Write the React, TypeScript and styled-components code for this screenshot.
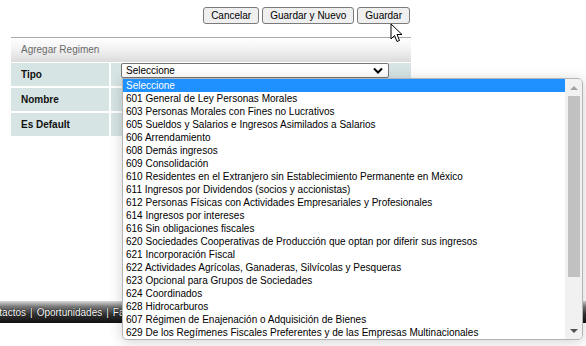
import styled, { createGlobalStyle } from 'styled-components'

const GlobalStyle = createGlobalStyle`
  body {
    margin: 0;
    padding: 0;
    background: #ffffff;
    font-family: "Liberation Sans", Arial, sans-serif;
    font-size: 10px;
  }
`

const opciones = [
  'Seleccione',
  '601 General de Ley Personas Morales',
  '603 Personas Morales con Fines no Lucrativos',
  '605 Sueldos y Salarios e Ingresos Asimilados a Salarios',
  '606 Arrendamiento',
  '608 Demás ingresos',
  '609 Consolidación',
  '610 Residentes en el Extranjero sin Establecimiento Permanente en México',
  '611 Ingresos por Dividendos (socios y accionistas)',
  '612 Personas Físicas con Actividades Empresariales y Profesionales',
  '614 Ingresos por intereses',
  '616 Sin obligaciones fiscales',
  '620 Sociedades Cooperativas de Producción que optan por diferir sus ingresos',
  '621 Incorporación Fiscal',
  '622 Actividades Agrícolas, Ganaderas, Silvícolas y Pesqueras',
  '623 Opcional para Grupos de Sociedades',
  '624 Coordinados',
  '628 Hidrocarburos',
  '607 Régimen de Enajenación o Adquisición de Bienes',
  '629 De los Regímenes Fiscales Preferentes y de las Empresas Multinacionales',
]

const Page = styled.div`
  position: relative;
  height: 346px;
  overflow: hidden;
`

const Main = styled.div`
  height: 301px;
  box-sizing: border-box;
  padding: 7px 0 0 11px;
`

const Panel = styled.div`
  width: 400px;
`

const Toolbar = styled.div`
  display: flex;
  justify-content: flex-end;
  gap: 3px;
  padding-right: 1px;
`

const Boton = styled.button`
  height: 17px;
  padding: 0 7px;
  font-family: "Liberation Sans", Arial, sans-serif;
  font-size: 10px;
  color: #000;
  background: #efefef;
  border: 1px solid #7a7a7a;
  border-radius: 3px;
`

const Encabezado = styled.div`
  margin-top: 13px;
  height: 24px;
  line-height: 24px;
  border-top: 1px solid #a9a9a9;
  background: linear-gradient(#ffffff, #f4f4f4 40%, #dcdcdc);
  color: #6a6a6a;
  padding-left: 10px;
`

const Tabla = styled.div`
  margin-top: 1px;
  display: grid;
  grid-template-columns: 98px 300px;
  grid-auto-rows: 23px;
  gap: 2px;
`

const Etiqueta = styled.div`
  background: #d7e4e4;
  font-weight: bold;
  color: #111;
  display: flex;
  align-items: center;
  padding-left: 10px;
`

const Valor = styled.div`
  background: #d7e4e4;
  padding-left: 10px;
`

const SelectWrap = styled.div`
  position: relative;
  width: 268px;
`

const SelectBox = styled.div`
  height: 15px;
  box-sizing: border-box;
  background: #fff;
  border: 1px solid #767676;
  border-radius: 2px;
  display: flex;
  align-items: center;
  justify-content: space-between;
  padding: 0 5px 0 4px;
  color: #000;
`

const Lista = styled.div`
  position: absolute;
  top: 15px;
  left: 1px;
  width: 461px;
  height: 262px;
  box-sizing: border-box;
  background: #fff;
  border: 1px solid #b4b4b4;
  border-radius: 0 5px 5px 5px;
  box-shadow: 0 2px 14px rgba(0, 0, 0, 0.18);
  display: flex;
  overflow: hidden;
  z-index: 5;
`

const Opciones = styled.div`
  flex: 1;
`

const Opcion = styled.div<{ $activa?: boolean }>`
  height: 13px;
  line-height: 13px;
  padding-left: 3px;
  white-space: nowrap;
  color: ${(p) => (p.$activa ? '#fff' : '#000')};
  background: ${(p) => (p.$activa ? '#1e90ff' : 'transparent')};
`

const Scroll = styled.div`
  width: 17px;
  background: #f1f1f1;
  display: flex;
  flex-direction: column;
  align-items: center;
`

const Flecha = styled.div<{ $abajo?: boolean }>`
  height: 17px;
  flex: none;
  display: flex;
  align-items: center;
  justify-content: center;
  &::after {
    content: '';
    border-left: 4px solid transparent;
    border-right: 4px solid transparent;
    ${(p) =>
      p.$abajo
        ? 'border-top: 4px solid #505050;'
        : 'border-bottom: 4px solid #a3a3a3;'}
  }
`

const Pulgar = styled.div`
  width: 12px;
  height: 181px;
  background: #c1c1c1;
`

const Pista = styled.div`
  flex: 1;
`

const Cursor = styled.svg`
  position: absolute;
  left: 390px;
  top: 23px;
  z-index: 6;
`

const Pie = styled.div`
  height: 22px;
  background: linear-gradient(#dadada, #7a7a7a 25%, #333 60%, #111);
  color: #fff;
  display: flex;
  align-items: center;
  overflow: hidden;
  white-space: nowrap;
`

const Menu = styled.div`
  margin-left: -19px;
  display: flex;
  align-items: center;
  text-shadow: 0 0 1px #000, 0 0 1px #000;
`

const Separador = styled.span`
  margin: 0 4px 0 4px;
`

function App() {
  const enlaces = ['Contactos', 'Oportunidades', 'Facturas']

  return (
    <>
      <GlobalStyle />
      <Page>
        <Main>
          <Panel>
            <Toolbar>
              <Boton>Cancelar</Boton>
              <Boton>Guardar y Nuevo</Boton>
              <Boton>Guardar</Boton>
            </Toolbar>
            <Encabezado>Agregar Regimen</Encabezado>
            <Tabla>
              <Etiqueta>Tipo</Etiqueta>
              <Valor>
                <SelectWrap>
                  <SelectBox>
                    <span>Seleccione</span>
                    <svg width="10" height="7" viewBox="0 0 10 7">
                      <path d="M1 1.5 L5 5.5 L9 1.5" fill="none" stroke="#000" strokeWidth="2" />
                    </svg>
                  </SelectBox>
                  <Lista>
                    <Opciones>
                      {opciones.map((o, i) => (
                        <Opcion key={o} $activa={i === 0}>{o}</Opcion>
                      ))}
                    </Opciones>
                    <Scroll>
                      <Flecha />
                      <Pulgar />
                      <Pista />
                      <Flecha $abajo />
                    </Scroll>
                  </Lista>
                </SelectWrap>
              </Valor>
              <Etiqueta>Nombre</Etiqueta>
              <Valor />
              <Etiqueta>Es Default</Etiqueta>
              <Valor />
            </Tabla>
          </Panel>
        </Main>
        <Pie>
          <Menu>
            {enlaces.map((e, i) => (
              <span key={e}>
                {i > 0 && <Separador>|</Separador>}
                {e}
              </span>
            ))}
          </Menu>
        </Pie>
        <Cursor width="14" height="21" viewBox="0 0 14 21">
          <path
            d="M1 1 L1 16 L4.5 12.5 L7 18.5 L9.5 17.5 L7 11.5 L12 11.5 Z"
            fill="#fff"
            stroke="#000"
            strokeWidth="1"
            strokeLinejoin="round"
          />
        </Cursor>
      </Page>
    </>
  )
}

export default App
